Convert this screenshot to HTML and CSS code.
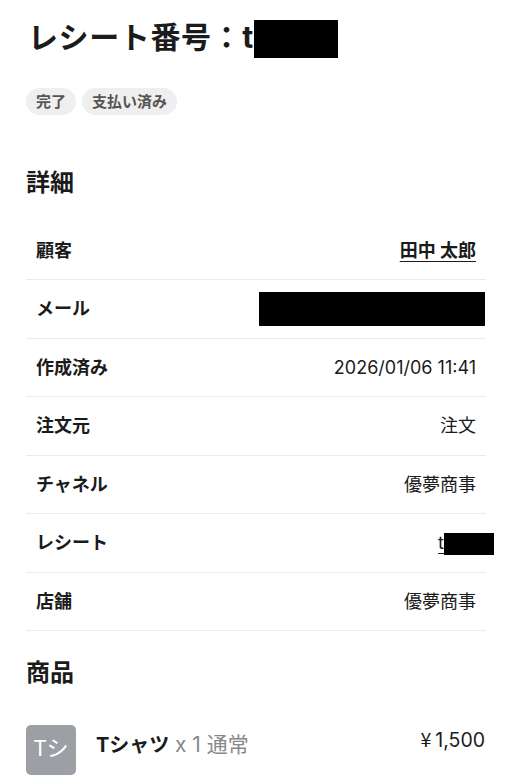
FILE: index.html
```html
<!DOCTYPE html>
<html lang="ja">
<head>
  <meta charset="UTF-8">
  <title>レシート</title>
  <link rel="stylesheet" href="styles.css">
</head>
<body>
  <div class="page">

    <!-- タイトル -->
    <h1 class="title">レシート番号：t<span class="mask mask-title"></span></h1>

    <div class="badges">
      <span class="badge">完了</span>
      <span class="badge">支払い済み</span>
    </div>

    <!-- 詳細 -->
    <h2 class="section-title">詳細</h2>
    <div class="details">
      <div class="row">
        <span class="label">顧客</span>
        <a class="value link" href="#">田中 太郎</a>
      </div>
      <div class="row">
        <span class="label">メール</span>
        <span class="value"><span class="mask mask-mail"></span></span>
      </div>
      <div class="row">
        <span class="label">作成済み</span>
        <span class="value">2026/01/06 11:41</span>
      </div>
      <div class="row">
        <span class="label">注文元</span>
        <span class="value">注文</span>
      </div>
      <div class="row">
        <span class="label">チャネル</span>
        <span class="value">優夢商事</span>
      </div>
      <div class="row">
        <span class="label">レシート</span>
        <span class="value"><a class="link" href="#">t</a><span class="mask mask-receipt"></span></span>
      </div>
      <div class="row">
        <span class="label">店舗</span>
        <span class="value">優夢商事</span>
      </div>
    </div>

    <!-- 商品 -->
    <h2 class="section-title products-title">商品</h2>
    <div class="product">
      <div class="thumb">Tシ</div>
      <div class="product-name">
        <strong>Tシャツ</strong>
        <span class="product-meta">x 1 通常</span>
      </div>
      <div class="price"><span class="yen">¥</span>1,500</div>
    </div>

  </div>
</body>
</html>
```

FILE: styles.css
```css
html, body {
  margin: 0;
  padding: 0;
  background: #fff;
  color: #1b1b1b;
  font-family: "Inter", "Noto Sans CJK JP", sans-serif;
}

.page {
  width: 460px;
  margin-left: 26px;
  padding-top: 17px;
}

.title {
  margin: 0;
  padding-left: 2px;
  font-size: 30px;
  line-height: 40px;
  font-weight: 700;
  letter-spacing: 0.6px;
  white-space: nowrap;
}

.mask {
  display: inline-block;
  background: #000;
}

.mask-title {
  width: 84px;
  height: 38px;
  vertical-align: -10px;
}

.badges {
  display: flex;
  gap: 6px;
  margin-top: 30px;
}

.badge {
  height: 27px;
  line-height: 27px;
  padding: 0 10px;
  border-radius: 14px;
  background: #efefef;
  color: #555;
  font-size: 15px;
  font-weight: 700;
}

.section-title {
  margin: 52px 0 0;
  font-size: 24px;
  line-height: 32px;
  font-weight: 700;
}

.details {
  margin-top: 22.5px;
}

.row {
  display: flex;
  justify-content: space-between;
  align-items: center;
  padding: 15px 10px;
  line-height: 27.5px;
  font-size: 18px;
  border-bottom: 1px solid #ebebeb;
}

.label {
  font-weight: 700;
}

.value {
  display: flex;
  align-items: center;
}

.link {
  color: #1b1b1b;
  text-decoration: underline;
  text-underline-offset: 4px;
  text-decoration-thickness: 1px;
}

a.value {
  font-weight: 700;
}

.mask-mail {
  width: 226px;
  height: 34px;
  margin: -4px -9px -4px 0;
}

.mask-receipt {
  width: 50px;
  height: 22px;
  margin-right: -18px;
  margin-top: 3px;
}

.products-title {
  margin-top: 26px;
}

.product {
  display: flex;
  align-items: flex-start;
  gap: 20px;
  margin-top: 36px;
}

.thumb {
  flex: none;
  width: 50px;
  height: 50px;
  border-radius: 5px;
  background: #9c9fa3;
  color: #fff;
  font-family: "Noto Sans CJK JP", sans-serif;
  font-size: 22px;
  display: flex;
  align-items: center;
  justify-content: center;
  padding-bottom: 8px;
  box-sizing: border-box;
}

.product-name {
  flex: 1;
  font-size: 20px;
  line-height: 30px;
  padding-top: 5px;
}

.product-name strong {
  font-weight: 700;
}

.product-meta {
  color: #888;
  font-size: 21px;
}

.price {
  font-size: 19.5px;
  line-height: 27px;
  margin-right: 1px;
}

.yen {
  font-family: "Noto Sans CJK JP", sans-serif;
  margin-right: 4px;
}
```
